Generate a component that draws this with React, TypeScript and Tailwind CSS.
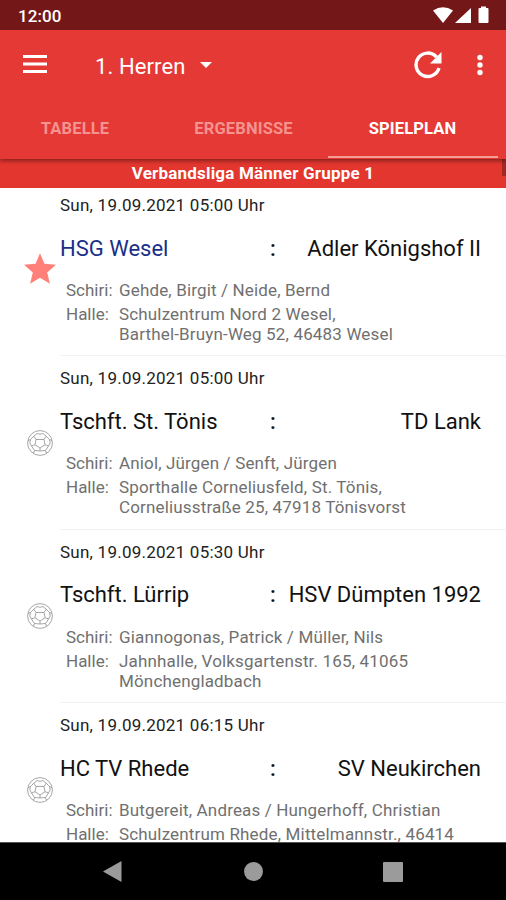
import { clsx } from "clsx";

type Match = {
  date: string;
  home: string;
  guest: string;
  referees: string;
  hall: string[];
  favorite?: boolean;
};

const matches: Match[] = [
  {
    date: "Sun, 19.09.2021 05:00 Uhr",
    home: "HSG Wesel",
    guest: "Adler Königshof II",
    referees: "Gehde, Birgit / Neide, Bernd",
    hall: ["Schulzentrum Nord 2 Wesel,", "Barthel-Bruyn-Weg 52, 46483 Wesel"],
    favorite: true,
  },
  {
    date: "Sun, 19.09.2021 05:00 Uhr",
    home: "Tschft. St. Tönis",
    guest: "TD Lank",
    referees: "Aniol, Jürgen / Senft, Jürgen",
    hall: ["Sporthalle Corneliusfeld, St. Tönis,", "Corneliusstraße 25, 47918 Tönisvorst"],
  },
  {
    date: "Sun, 19.09.2021 05:30 Uhr",
    home: "Tschft. Lürrip",
    guest: "HSV Dümpten 1992",
    referees: "Giannogonas, Patrick / Müller, Nils",
    hall: ["Jahnhalle, Volksgartenstr. 165, 41065", "Mönchengladbach"],
  },
  {
    date: "Sun, 19.09.2021 06:15 Uhr",
    home: "HC TV Rhede",
    guest: "SV Neukirchen",
    referees: "Butgereit, Andreas / Hungerhoff, Christian",
    hall: ["Schulzentrum Rhede, Mittelmannstr., 46414"],
  },
];

const tabs = ["TABELLE", "ERGEBNISSE", "SPIELPLAN"];

function StarIcon() {
  return (
    <svg className="-mt-[2px]" width="32" height="31" viewBox="2 2 20 19" fill="#ff8078">
      <path d="M12 17.3L18.2 21l-1.7-7L22 9.2l-7.2-.6L12 2 9.2 8.600 2 9.200 7.500 14l-1.700 7z" />
    </svg>
  );
}

function BallIcon() {
  return (
    <svg width="26" height="26" viewBox="0 0 26 26" fill="none" stroke="#8f8f8f" strokeWidth="0.8">
      <circle cx="13" cy="13" r="12.4" />
      <path d="M9 9.5h8l1 5.2-5 3.3-5-3.3z" />
      <path d="M9 9.5L6.8 6.2M17 9.5l2.2-3.3M18 14.7l3.5 1.3M13 18v3M8 14.7L4.5 16" />
      <path d="M6.8 6.2L10 3.500l3 .8 3-.8 3.200 2.700M6.800 6.200L3.500 9.500l-2.500 1M19.200 6.200l3.300 3.300 2.500 1" />
      <path d="M3.500 9.500L2.800 13l1.700 3M22.500 9.500l.7 3.500-1.700 3M4.500 16l3 4.500-1 3M21.500 16l-3 4.500 1 3M7.500 20.500l5.500.5 5.500-.5" />
    </svg>
  );
}

function StatusBar() {
  return (
    <div className="flex h-[30px] shrink-0 items-center justify-between bg-[#741718] pr-[16px] pl-[18px] text-white">
      <span className="pt-[3px] text-[17px] font-medium tracking-[0.1px]">12:00</span>
      <svg width="58" height="18" viewBox="0 0 58 18" fill="white">
        <path d="M1 4.5Q11 -2 21 4.5L11 17z" />
        <path d="M39 2v15H23z" />
        <path d="M49 2V.5h5V2h1.500q1 0 1 1v13q0 1-1 1h-8q-1 0-1-1V3q0-1 1-1z" />
      </svg>
    </div>
  );
}

function AppBar() {
  return (
    <header className="relative z-10 flex h-[129px] shrink-0 flex-col bg-[#e53935] text-white shadow-[0_2px_4px_rgba(0,0,0,0.4)]">
      <div className="flex h-[69px] items-center pl-[23px]">
        <svg className="-mt-[1px]" width="24" height="18" viewBox="0 0 24 18" fill="white">
          <path d="M0 0h24v3H0zM0 7.500h24v3H0zM0 15h24v3H0z" />
        </svg>
        <span className="ml-[48px] pt-[3px] text-[22px] tracking-[0.1px]">1. Herren</span>
        <svg className="mt-[1px] ml-[15px]" width="12" height="6" viewBox="0 0 12 6" fill="white">
          <path d="M0 0h12L6 6z" />
        </svg>
        <svg className="mr-[35px] ml-auto" width="28" height="28" viewBox="0 0 28 28">
          <path d="M25 17A11.700 11.700 0 1 1 22.500 6" fill="none" stroke="white" strokeWidth="3.400" />
          <path d="M27.500 1v11.500H16z" fill="white" />
        </svg>
        <svg className="mr-[23px]" width="6" height="22" viewBox="0 0 6 22" fill="white">
          <circle cx="3" cy="3.500" r="2.700" />
          <circle cx="3" cy="11" r="2.700" />
          <circle cx="3" cy="18.500" r="2.700" />
        </svg>
      </div>
      <nav className="-ml-[9px] grid flex-1 grid-cols-[168px_169px_169px]">
        {tabs.map((tab) => (
          <div key={tab} className="relative flex justify-center pt-[18px]">
            <span
              className={clsx(
                "text-[16.5px] leading-[24px] font-bold tracking-[0.15px]",
                tab === "SPIELPLAN" ? "text-white" : "text-[#f4938f]",
              )}
            >
              {tab}
            </span>
            {tab === "SPIELPLAN" && (
              <div className="absolute -right-[1px] bottom-[1px] left-0 h-[2px] bg-[#f89c98]" />
            )}
          </div>
        ))}
      </nav>
    </header>
  );
}

function MatchRow({ match }: { match: Match }) {
  return (
    <li className="flex h-[173.4px] shrink-0">
      <div className="flex w-[60px] shrink-0 justify-center pr-[1px] pl-[21px]">
        <div className="flex h-[173px] items-center">{match.favorite ? <StarIcon /> : <BallIcon />}</div>
      </div>
      <div className="flex-1 border-b border-[#f3f3f3] pt-[11px]">
        <p className="text-[17px] leading-[22px] tracking-[0.24px] text-[#222]">{match.date}</p>
        <div className="mt-[18.5px] flex pr-[25px] text-[22px] leading-[28px] text-[#111]">
          <span className={clsx("w-[210px]", match.favorite && "text-[#1a2f8a]")}>{match.home}</span>
          <span className="font-medium">:</span>
          <span className="ml-auto">{match.guest}</span>
        </div>
        <dl className="mt-[17.5px] grid grid-cols-[53px_1fr] gap-y-[4px] pl-[6px] text-[17px] leading-[20px] whitespace-nowrap text-[#707070]">
          <dt>Schiri:</dt>
          <dd className="tracking-[0.15px]">{match.referees}</dd>
          <dt>Halle:</dt>
          <dd className="tracking-[0.16px]">
            {match.hall.map((line) => (
              <div key={line}>{line}</div>
            ))}
          </dd>
        </dl>
      </div>
    </li>
  );
}

function NavigationBar() {
  return (
    <div className="flex h-[58px] shrink-0 items-center justify-between border-t border-[#555] bg-black pr-[103px] pl-[103px]">
      <svg width="19" height="21" viewBox="0 0 19 21" fill="#9b9b9b">
        <path d="M0 10.500L18.500 0v21z" />
      </svg>
      <div className="ml-[2px] size-[19px] rounded-full bg-[#9b9b9b]" />
      <div className="size-[20px] rounded-[1px] bg-[#9b9b9b]" />
    </div>
  );
}

export default function App() {
  return (
    <div className="flex h-[900px] w-[506px] flex-col overflow-hidden bg-white font-['Roboto',sans-serif]">
      <StatusBar />
      <AppBar />
      <div className="relative z-[1] flex h-[29px] shrink-0 items-center justify-center bg-[#e2362f] text-[17px] font-bold tracking-[0.2px] text-white">
        <span>Verbandsliga Männer Gruppe 1</span>
        <div className="absolute top-0 right-0 h-[17px] w-[4px] bg-[#a32724]" />
      </div>
      <ul className="-mt-[5px] flex min-h-0 flex-1 flex-col overflow-hidden">
        {matches.map((match) => (
          <MatchRow key={match.home} match={match} />
        ))}
      </ul>
      <NavigationBar />
    </div>
  );
}
